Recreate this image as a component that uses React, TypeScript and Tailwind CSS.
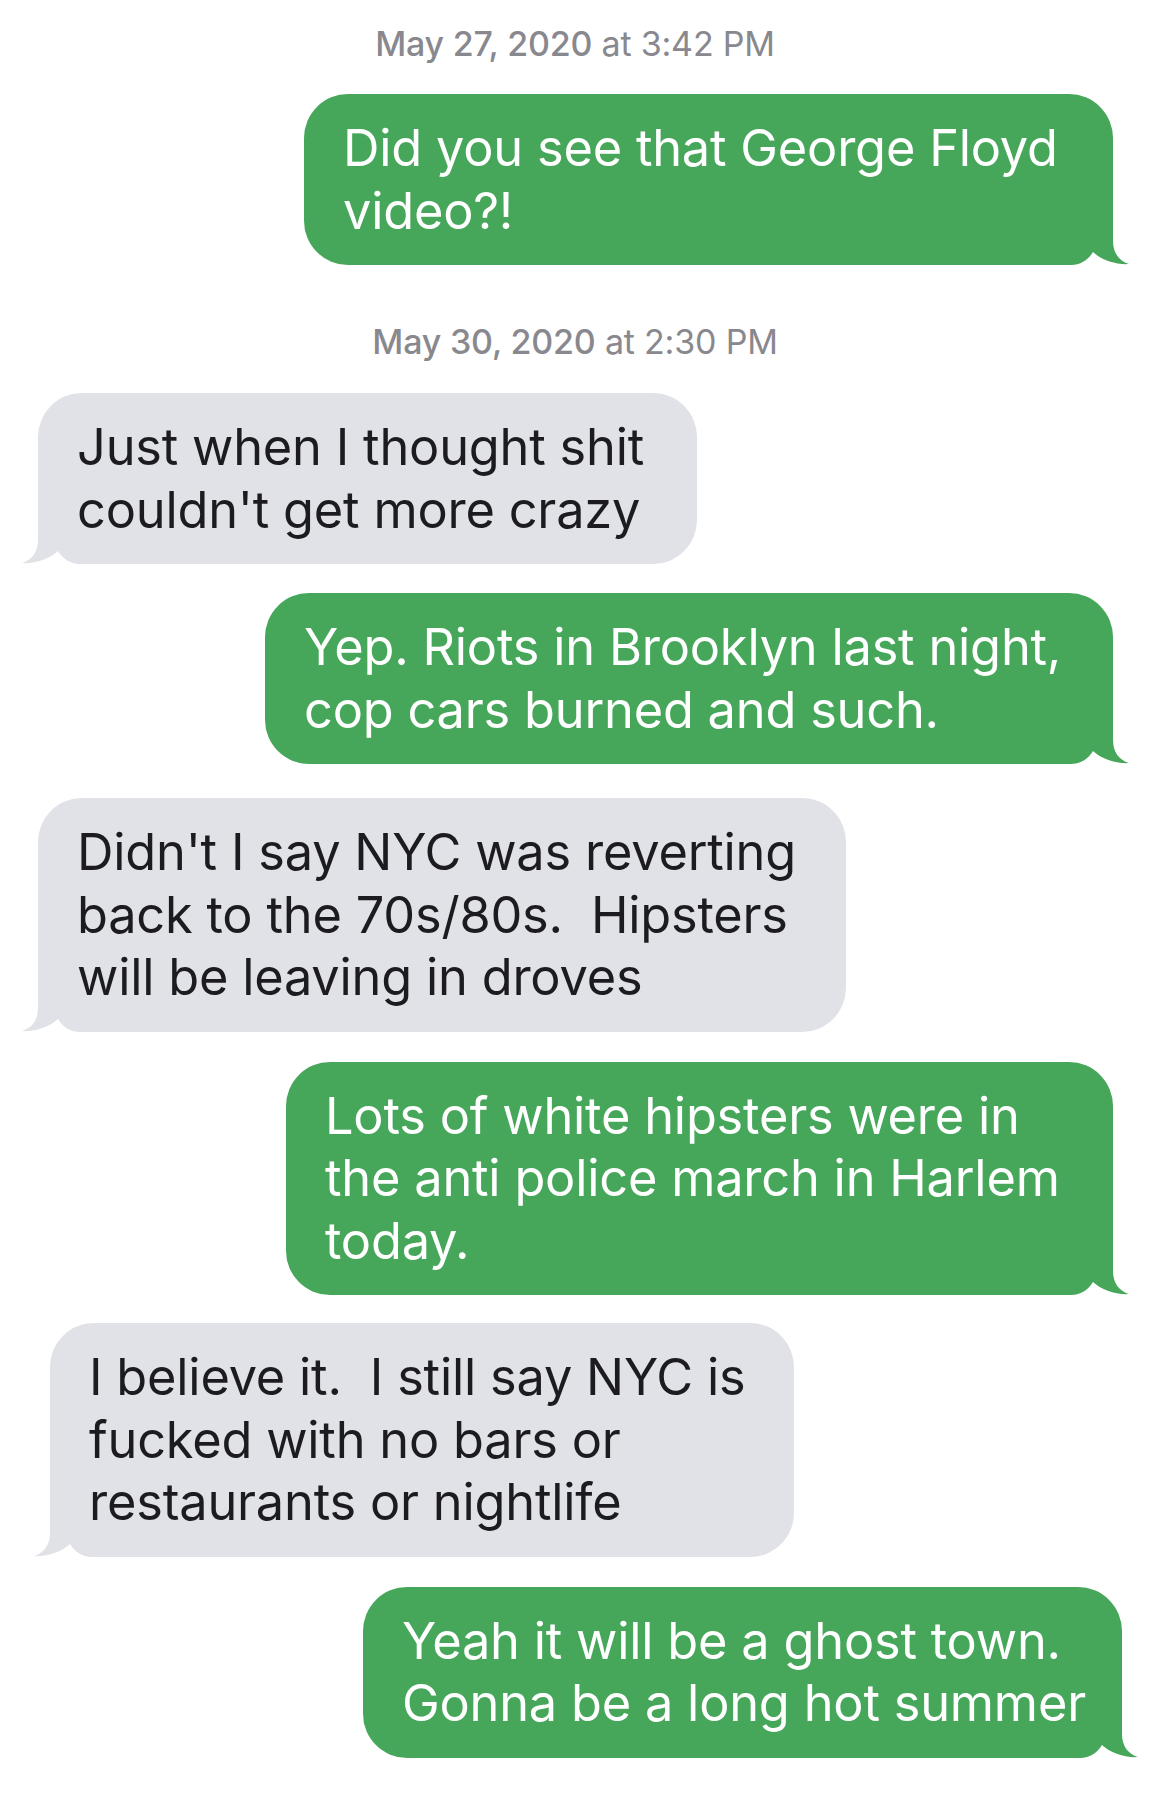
import React from "react";

type Msg = {
  from: "me" | "them";
  lines: string[];
  width: number;
  side: number;
  mt: string;
};

const messages: (Msg | { stamp: [string, string]; mt: string })[] = [
  { stamp: ["May 27, 2020", "at 3:42 PM"], mt: "mt-0" },
  { from: "me", lines: ["Did you see that George Floyd", "video?!"], width: 809, side: 37, mt: "mt-[30px]" },
  { stamp: ["May 30, 2020", "at 2:30 PM"], mt: "mt-[57px]" },
  { from: "them", lines: ["Just when I thought shit", "couldn't get more crazy"], width: 659, side: 38, mt: "mt-[31px]" },
  { from: "me", lines: ["Yep. Riots in Brooklyn last night,", "cop cars burned and such."], width: 848, side: 37, mt: "mt-[29px]" },
  { from: "them", lines: ["Didn't I say NYC was reverting", "back to the 70s/80s.  Hipsters", "will be leaving in droves"], width: 808, side: 38, mt: "mt-[34px]" },
  { from: "me", lines: ["Lots of white hipsters were in", "the anti police march in Harlem", "today."], width: 827, side: 37, mt: "mt-[30px]" },
  { from: "them", lines: ["I believe it.  I still say NYC is", "fucked with no bars or", "restaurants or nightlife"], width: 744, side: 50, mt: "mt-[28px]" },
  { from: "me", lines: ["Yeah it will be a ghost town.", "Gonna be a long hot summer"], width: 759, side: 28, mt: "mt-[30px]" },
];

// bubble corner + tail, drawn for the right side; mirrored for the left
function Tail({ color, left }: { color: string; left?: boolean }) {
  return (
    <svg
      width="62"
      height="46"
      viewBox="0 0 62 46"
      className={left ? "absolute left-[-18px] top-[calc(100%-44px)] -scale-x-100" : "absolute right-[-18px] top-[calc(100%-44px)]"}
    >
      <rect x="0" y="0" width="62" height="46" fill="#ffffff" />
      <path
        d="M0 0 H44 V20 C44 32 50 40 60 43 C48 44 32 39 24 31 C20 38 12 44 2 44 H0 Z"
        fill={color}
      />
    </svg>
  );
}

function Bubble({ m }: { m: Msg }) {
  const me = m.from === "me";
  const color = me ? "#46a75a" : "#e1e2e7";
  return (
    <div
      className={`relative rounded-[44px] px-[39px] py-[23px] text-[50.5px] leading-[62.5px] ${me ? "self-end bg-[#46a75a] text-white" : "self-start bg-[#e1e2e7] text-[#1c1c20]"} ${m.mt}`}
      style={{ width: m.width, [me ? "marginRight" : "marginLeft"]: m.side }}
    >
      <Tail color={color} left={!me} />
      <div className="relative whitespace-pre">
        {m.lines.map((l, i) => (
          <div key={i}>{l}</div>
        ))}
      </div>
    </div>
  );
}

export default function App() {
  return (
    <div className="w-[1150px] h-[1800px] bg-white overflow-hidden font-['Inter','Noto_Sans',sans-serif] tracking-[-0.2px]">
      <div className="flex flex-col pt-[24px]">
        {messages.map((m, i) =>
          "stamp" in m ? (
            <div key={i} className={`text-center text-[34px] leading-[40px] text-[#88888e] ${m.mt}`}>
              <span className="font-medium">{m.stamp[0]}</span> <span>{m.stamp[1]}</span>
            </div>
          ) : (
            <Bubble key={i} m={m} />
          )
        )}
      </div>
    </div>
  );
}
